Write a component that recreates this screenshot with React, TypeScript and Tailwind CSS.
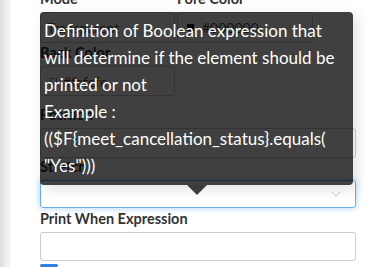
import { ChevronDown } from "lucide-react";

function Label({ children }: { children: React.ReactNode }) {
  return (
    <div className="h-[18px] text-[14.5px] leading-[18px] font-bold text-[#333]">
      {children}
    </div>
  );
}

export default function App() {
  return (
    <div
      className="relative flex h-[267px] w-[371px] overflow-hidden bg-white"
      style={{ fontFamily: "Lato, 'Noto Sans', sans-serif" }}
    >
      <div className="w-[11px] shrink-0 bg-gradient-to-r from-[#dcdcdc] via-[#ececec] to-[#f6f6f6]" />

      <div className="-mt-[10px] flex w-[345px] flex-col pl-[29px]">
        <div className="flex gap-[2px]">
          <div className="w-[135px]">
            <Label>Mode</Label>
            <div className="mt-[4px] flex h-[31px] items-center rounded-[3px] border border-[#ccc] px-[6px] text-[14px] text-[#555]">
              Transparent
            </div>
          </div>
          <div className="w-[136px]">
            <Label>Fore Color</Label>
            <div className="mt-[4px] flex h-[31px] items-center gap-[8px] rounded-[3px] border border-[#ccc] px-[9px] text-[14px] text-[#555]">
              <span className="h-[7px] w-[7px] bg-black" />
              #000000
            </div>
          </div>
        </div>

        <div className="mt-[1px] w-[135px]">
          <Label>Back Color</Label>
          <div className="mt-[4px] flex h-[30px] items-center gap-[6px] rounded-[3px] border border-[#ccc] px-[9px] text-[14px] text-[#555]">
            <span className="h-[7px] w-[7px] border border-[#999] bg-[#fefefe]" />
            #fefefe
          </div>
        </div>

        <div className="mt-[10px]">
          <Label>Position</Label>
          <div className="mt-[4px] h-[30px] rounded-[3px] border border-[#ccc]" />
        </div>

        <div className="mt-0">
          <Label>Stretch</Label>
          <div className="mt-[4px] flex h-[28px] items-center justify-end rounded-[3px] border border-[#66afe9] px-[10px] shadow-[0_0_6px_rgba(102,175,233,0.6)]">
            <ChevronDown className="h-[18px] w-[18px] text-[#b5b5b5]" strokeWidth={1.1} />
          </div>
        </div>

        <div className="mt-[2px]">
          <Label>Print When Expression</Label>
          <div className="mt-[4px] h-[29px] rounded-[3px] border border-[#ccc]" />
        </div>

        <div className="mt-[3px] h-[14px] w-[18px] rounded-[3px] bg-[#2f80e4]" />
      </div>

      <div className="absolute left-[40px] top-[12px] w-[313px] rounded-[4px] bg-[rgba(0,0,0,0.75)] px-[4px] pb-[6px] pt-[5px] text-[17px] leading-[27px] text-white shadow-[4px_4px_14px_rgba(0,0,0,0.12)]">
        <div>Definition of Boolean expression that</div>
        <div>will determine if the element should be</div>
        <div>printed or not</div>
        <div>Example :</div>
        <div>(($F{"{"}meet_cancellation_status{"}"}.equals(</div>
        <div>"Yes")))</div>
        <div className="absolute left-1/2 top-full h-0 w-0 -translate-x-1/2 border-x-[10px] border-t-[10px] border-x-transparent border-t-[rgba(0,0,0,0.75)]" />
      </div>
    </div>
  );
}
